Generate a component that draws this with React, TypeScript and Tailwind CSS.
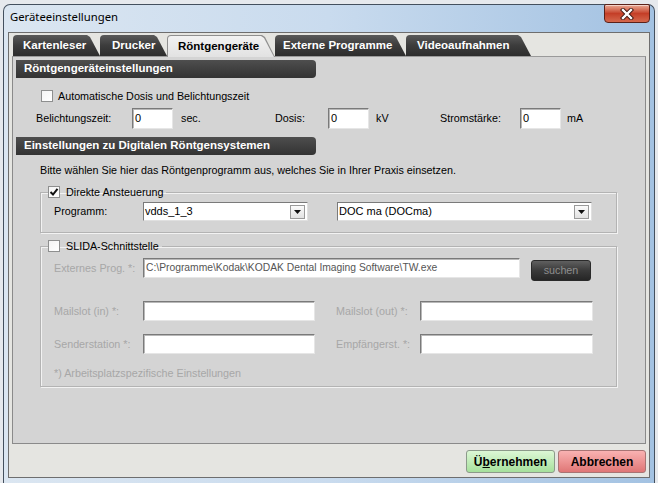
import React from "react";

function CheckBox({ checked = false }: { checked?: boolean }) {
  return (
    <span className="w-[12px] h-[12px] shrink-0 border border-[#8e8f8f] bg-gradient-to-br from-[#f4f4f4] to-white flex items-center justify-center">
      {checked && (
        <svg width="10" height="10" viewBox="0 0 10 10">
          <path d="M1.5 5 L4 7.5 L8.5 1.8" fill="none" stroke="#111" strokeWidth="2" />
        </svg>
      )}
    </span>
  );
}

function Input({ w, h = 21, value = "", disabled = false }: { w: number; h?: number; value?: string; disabled?: boolean }) {
  return (
    <div
      style={{ width: w, height: h }}
      className={
        "shrink-0 bg-white border border-t-[#7a7a7a] border-l-[#7a7a7a] border-r-[#e6e6e6] border-b-[#e6e6e6] shadow-[inset_1px_1px_0_#b8b8b8] flex items-center pl-[2px] leading-none " +
        (disabled ? "text-[#555] text-[10.3px]" : "text-black text-[11px]")
      }
    >
      {value}
    </div>
  );
}

function Select({ w, value }: { w: number; value: string }) {
  return (
    <div
      style={{ width: w }}
      className="shrink-0 h-[19px] bg-white border border-t-[#7a7a7a] border-l-[#7a7a7a] border-r-[#e0e0e0] border-b-[#e0e0e0] flex items-center justify-between pl-[1px] pr-[2px] text-[11px] text-black"
    >
      <span>{value}</span>
      <span className="w-[15px] h-[14px] border border-[#9a9a9a] bg-gradient-to-b from-[#fbfbfb] to-[#e2e2e2] flex items-center justify-center">
        <svg width="7" height="4" viewBox="0 0 7 4">
          <path d="M0 0 H7 L3.5 4 Z" fill="#111" />
        </svg>
      </span>
    </div>
  );
}

function SectionHeader({ children }: { children: React.ReactNode }) {
  return (
    <div className="ml-[3px] w-[300px] h-[18px] shrink-0 rounded-r-[4px] bg-gradient-to-b from-[#4e4e4e] to-[#333] flex items-center pl-[8px] text-[11.5px] font-bold text-white">
      {children}
    </div>
  );
}

const tabs = [
  { label: "Kartenleser", w: 87, pl: 10, active: false },
  { label: "Drucker", w: 67, pl: 12, active: false },
  { label: "Röntgengeräte", w: 108, pl: 11, active: true },
  { label: "Externe Programme", w: 131, pl: 8, active: false },
  { label: "Videoaufnahmen", w: 125, pl: 11, active: false },
];

function Tab({ label, w, pl, active }: { label: string; w: number; pl: number; active: boolean }) {
  if (active) {
    return (
      <div style={{ width: w }} className="relative z-10 h-[22px] -mb-[1px] shrink-0 rounded-tl-[4px] bg-[#8f8f8f] [clip-path:polygon(0_0,calc(100%_-_13px)_0,calc(100%_-_10px)_2px,100%_100%,0_100%)] pt-[1px] pl-[1px]">
        <div
          style={{ paddingLeft: pl - 1 }}
          className="h-full w-full rounded-tl-[3px] bg-gradient-to-b from-[#f2f2f2] to-[#e2e2e2] [clip-path:polygon(0_0,calc(100%_-_14px)_0,calc(100%_-_11px)_2px,calc(100%_-_1px)_100%,0_100%)] flex items-center text-[11.5px] font-bold text-black"
        >
          {label}
        </div>
      </div>
    );
  }
  return (
    <div
      style={{ width: w, paddingLeft: pl }}
      className="h-[21px] shrink-0 rounded-tl-[4px] bg-gradient-to-b from-[#5a5a5a] via-[#3c3c3c] to-[#2c2c2c] [clip-path:polygon(0_0,calc(100%_-_13px)_0,calc(100%_-_10px)_2px,100%_100%,0_100%)] flex items-center text-[11.5px] font-bold text-white"
    >
      {label}
    </div>
  );
}

export default function App() {
  return (
    <div className="w-[658px] h-[483px] overflow-hidden bg-[#e6e9ed] pt-[4px] px-[3px] font-['Liberation_Sans',Arial,sans-serif]">
      <div className="w-[652px] h-[479px] flex flex-col rounded-t-[7px] border border-b-0 border-[#44505e] bg-gradient-to-r from-[#dbe6f1] via-[#c9dbee] to-[#a3c2e2] px-[4px]">
        {/* title bar */}
        <div className="h-[27px] shrink-0 flex items-start justify-between">
          <span className="mt-[4px] ml-[2px] text-[11.3px] leading-[16px] text-black font-['Noto_Sans',sans-serif]">
            Geräteeinstellungen
          </span>
          <div className="-mt-[1px] w-[46px] h-[19px] rounded-b-[4px] rounded-t-[2px] border border-[#5b2119] bg-gradient-to-b from-[#e9a894] via-[#c43e27] to-[#d4674c] shadow-[inset_0_1px_0_rgba(255,255,255,0.5)] flex items-center justify-center">
            <svg width="14" height="12" viewBox="0 0 14 12">
              <path d="M3 2 L11 10 M11 2 L3 10" stroke="#3a1510" strokeWidth="4.2" strokeLinecap="square" />
              <path d="M3 2 L11 10 M11 2 L3 10" stroke="#ffffff" strokeWidth="2.4" strokeLinecap="square" />
            </svg>
          </div>
        </div>

        {/* client area */}
        <div className="h-[446px] shrink-0 border border-[#6e6e6e] bg-[#e5e5e1] flex flex-col pr-[3px]">
          {/* tab strip */}
          <div className="flex items-end pt-[2px] pl-[4px] h-[23px] shrink-0">
            {tabs.map((t) => (
              <Tab key={t.label} {...t} />
            ))}
          </div>

          {/* panel */}
          <div className="ml-[3px] w-[634px] h-[388px] shrink-0 border border-[#8a8a8a] border-t-[#9a9a9a] bg-[#d4d4d4] flex flex-col text-[10.75px] text-black">
            <div className="mt-[3px]">
              <SectionHeader>Röntgengeräteinstellungen</SectionHeader>
            </div>

            <div className="mt-[11px] ml-[28px] h-[14px] flex items-center gap-[5px]">
              <CheckBox />
              <span>Automatische Dosis und Belichtungszeit</span>
            </div>

            <div className="mt-[5px] ml-[23px] h-[21px] flex items-center">
              <span className="w-[96px] shrink-0">Belichtungszeit:</span>
              <Input w={41} value="0" />
              <span className="ml-[8px] w-[94px] shrink-0">sec.</span>
              <span className="w-[53px] shrink-0">Dosis:</span>
              <Input w={41} value="0" />
              <span className="ml-[7px] w-[64px] shrink-0">kV</span>
              <span className="w-[80px] shrink-0">Stromstärke:</span>
              <Input w={41} value="0" />
              <span className="ml-[6px]">mA</span>
            </div>

            <div className="mt-[8px]">
              <SectionHeader>Einstellungen zu Digitalen Röntgensystemen</SectionHeader>
            </div>

            <div className="mt-[9px] ml-[27px] leading-[13px]">
              Bitte wählen Sie hier das Röntgenprogramm aus, welches Sie in Ihrer Praxis einsetzen.
            </div>

            {/* group 1 */}
            <fieldset className="mt-[8px] ml-[27px] w-[577px] border border-[#b3b3b3] shadow-[inset_1px_1px_0_#f2f2f2,1px_1px_0_#f2f2f2] pb-[11px]">
              <legend className="ml-[7px] pr-[3px] h-[14px] flex items-center gap-[6px]">
                <CheckBox checked />
                <span>Direkte Ansteuerung</span>
              </legend>
              <div className="pt-[3px] pl-[13px] h-[22px] flex items-center">
                <span className="w-[89px] shrink-0">Programm:</span>
                <Select w={165} value="vdds_1_3" />
                <div className="ml-[29px]">
                  <Select w={255} value="DOC ma (DOCma)" />
                </div>
              </div>
            </fieldset>

            {/* group 2 */}
            <fieldset className="mt-[6px] ml-[27px] w-[577px] border border-[#b3b3b3] shadow-[inset_1px_1px_0_#f2f2f2,1px_1px_0_#f2f2f2] pb-[6px] pl-[13px]">
              <legend className="-ml-[6px] pr-[3px] h-[14px] flex items-center gap-[6px]">
                <CheckBox />
                <span>SLIDA-Schnittstelle</span>
              </legend>
              <div className="mt-[5px] h-[23px] flex items-start text-[#a7a7a7]">
                <span className="w-[89px] shrink-0 h-[20px] flex items-center">Externes Prog. *:</span>
                <Input w={377} h={20} value="C:\Programme\Kodak\KODAK Dental Imaging Software\TW.exe" disabled />
                <div className="ml-[11px] mt-[2px] w-[60px] h-[21px] rounded-[3px] border border-[#2a2a2a] bg-gradient-to-b from-[#606060] via-[#3a3a3a] to-[#262626] flex items-center justify-center text-[#8e8e8e]">
                  suchen
                </div>
              </div>
              <div className="mt-[20px] h-[20px] flex items-center text-[#a7a7a7]">
                <span className="w-[89px] shrink-0">Mailslot (in) *:</span>
                <Input w={172} h={20} />
                <span className="ml-[21px] w-[84px] shrink-0">Mailslot (out) *:</span>
                <Input w={173} h={20} />
              </div>
              <div className="mt-[13px] h-[20px] flex items-center text-[#a7a7a7]">
                <span className="w-[89px] shrink-0">Senderstation *:</span>
                <Input w={172} h={20} />
                <span className="ml-[21px] w-[84px] shrink-0">Empfängerst. *:</span>
                <Input w={173} h={20} />
              </div>
              <div className="mt-[13px] leading-[13px] text-[#a7a7a7]">*) Arbeitsplatzspezifische Einstellungen</div>
            </fieldset>
          </div>

          {/* buttons */}
          <div className="mt-[6px] flex justify-end gap-[3px]">
            <div className="w-[89px] h-[23px] rounded-[3px] border border-[#8c9a8a] bg-gradient-to-b from-[#dcf7d5] to-[#a6e09c] flex items-center justify-center text-[12px] font-bold text-black">
              Ü<u>b</u>ernehmen
            </div>
            <div className="w-[88px] h-[23px] rounded-[3px] border border-[#a87474] bg-gradient-to-b from-[#f9b2b2] to-[#df7676] flex items-center justify-center text-[12px] font-bold text-black">
              Abbrechen
            </div>
          </div>
        </div>
      </div>
    </div>
  );
}
